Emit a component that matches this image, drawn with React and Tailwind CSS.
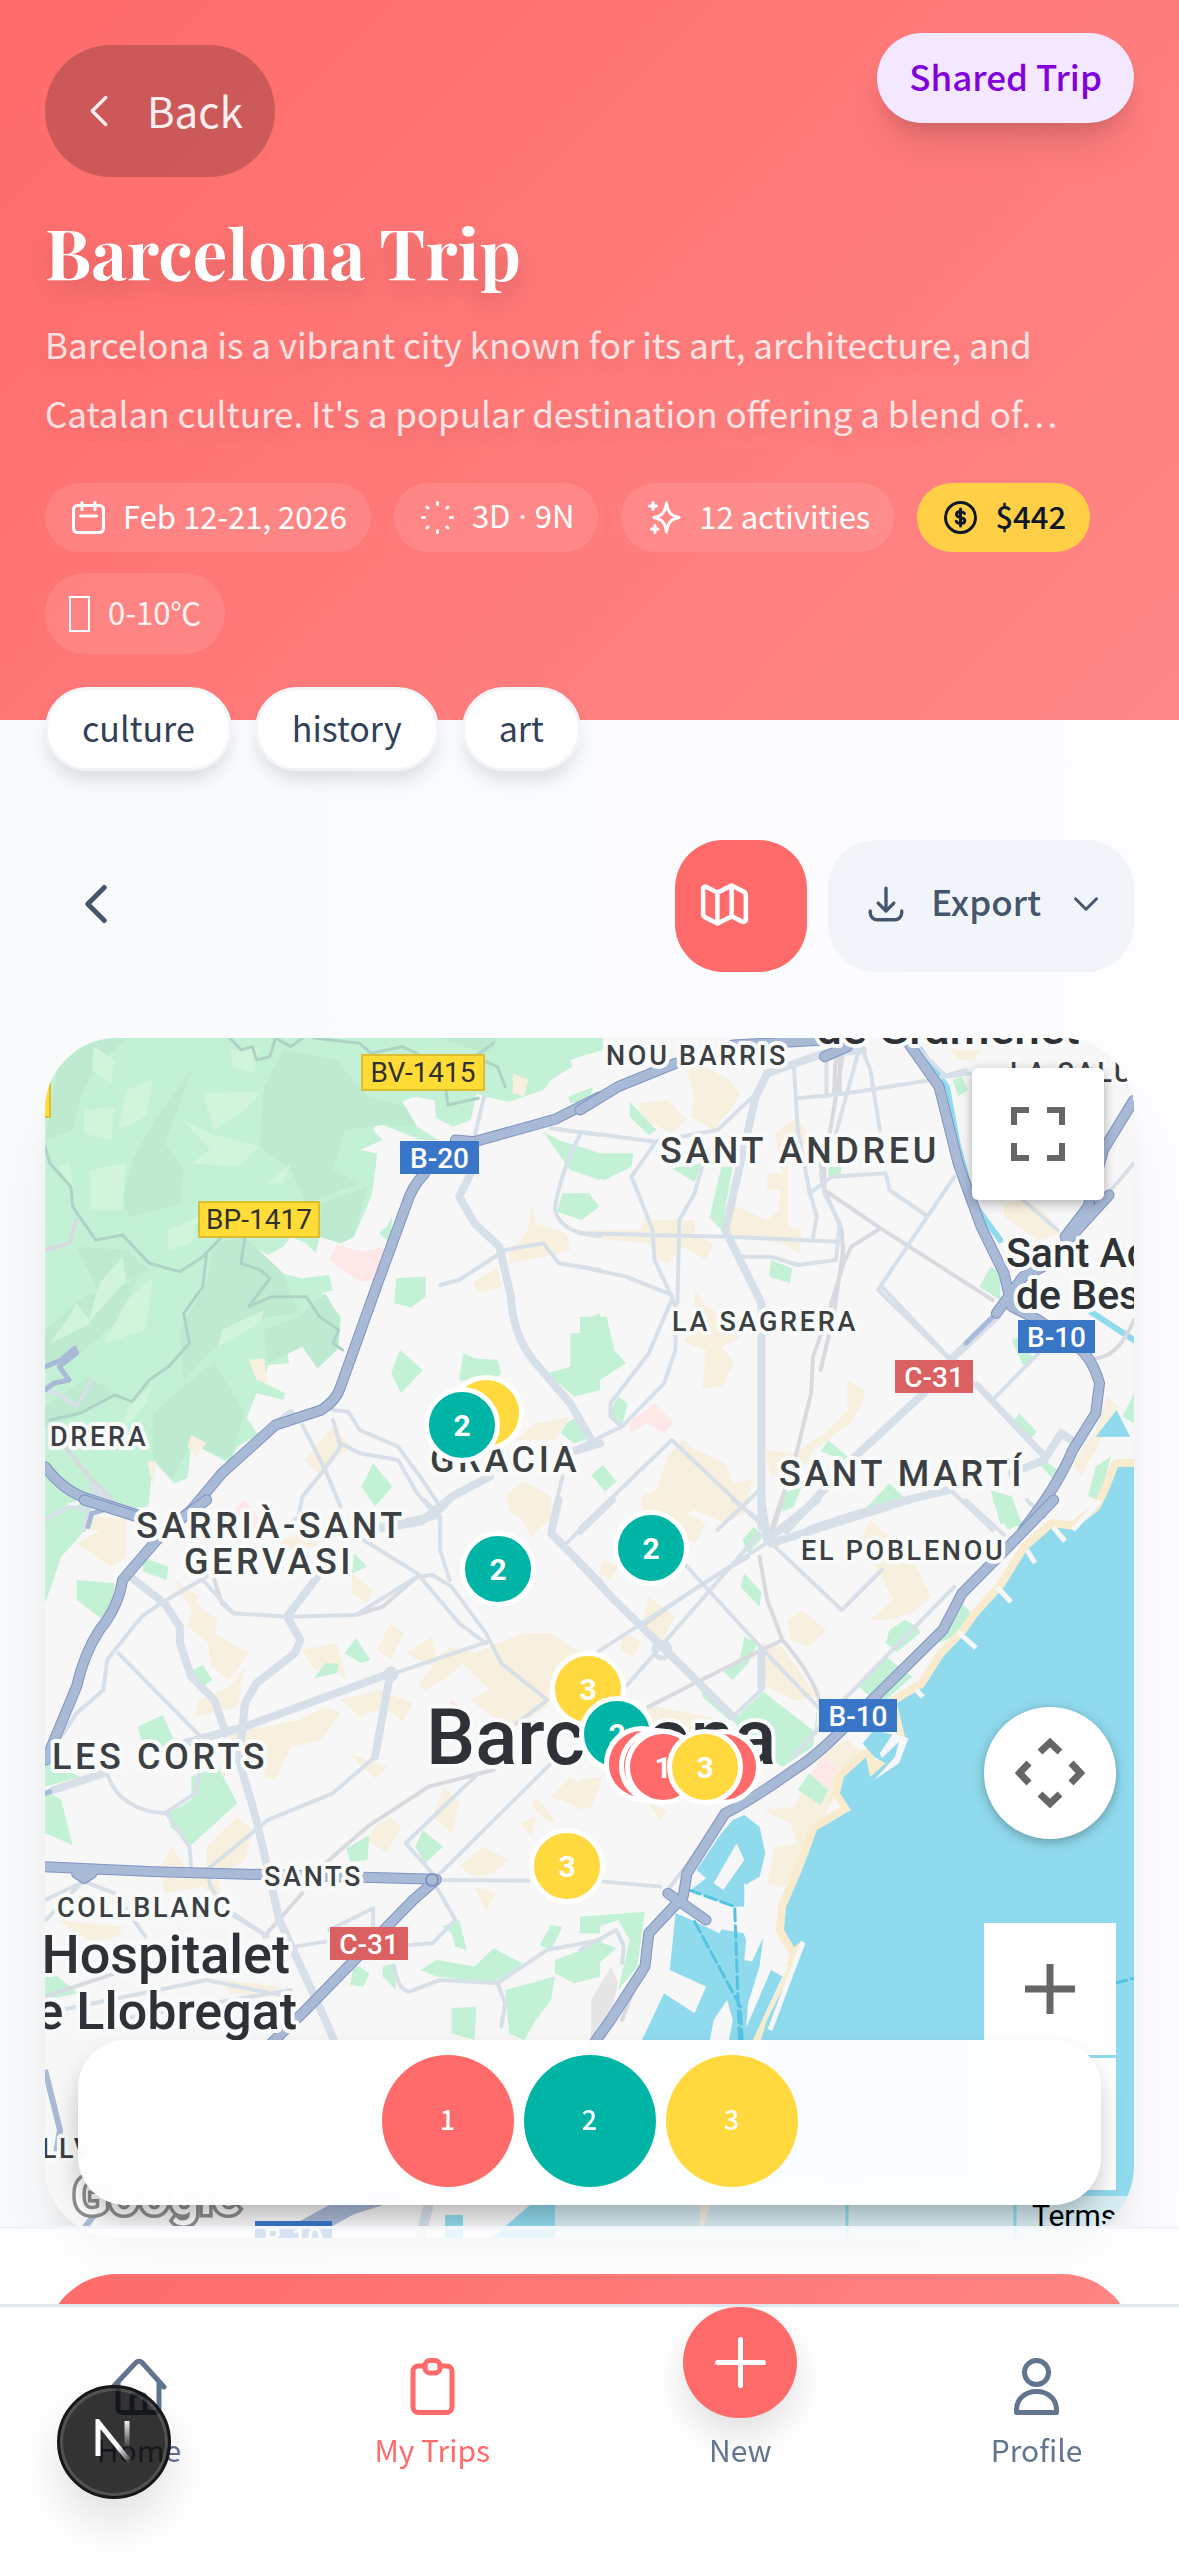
import { useState } from "react"
import { ChevronLeft, ChevronDown } from "lucide-react"

const BODY_FONT = "font-['Noto_Sans_CJK_SC','Noto_Sans',sans-serif]"

const tags = ["culture", "history", "art"]

const days = [
  { day: 1, color: "bg-[#ff6b6b]" },
  { day: 2, color: "bg-[#00b5a6]" },
  { day: 3, color: "bg-[#ffd93d]" },
]

// x / y are map units, same space as the map viewBox
const pins = [
  { day: 3, x: 486, y: 1413 },
  { day: 2, x: 462, y: 1425 },
  { day: 2, x: 498, y: 1569 },
  { day: 2, x: 651, y: 1548 },
  { day: 3, x: 588, y: 1689 },
  { day: 2, x: 617, y: 1734 },
  { day: 1, x: 642, y: 1764 },
  { day: 1, x: 657, y: 1766 },
  { day: 1, x: 723, y: 1767 },
  { day: 1, x: 663, y: 1767 },
  { day: 3, x: 705, y: 1767 },
  { day: 3, x: 567, y: 1866 },
]

const COAST =
  "M1134 1467 L1118 1467 1109 1490 1096 1517 1103 1507 1073 1530 1053 1527 1027 1550 1004 1587 977 1617 966 1633 943 1657 924 1687 897 1703 905 1737 886 1763 870 1777 866 1757 844 1777 840 1793 851 1810 817 1830 801 1873 786 1907 784 1930 794 1947 803 1940 794 1967 767 2020 700 2238"

const tiles = [
  {
    id: "nw",
    transform: "translate(0 1030) scale(.3827 .3333)",
    forest:
      "M118 24H1568V60L1490 90 1495 110 1440 150 1420 180 1330 215 1270 200 1245 190 1230 270 1185 290 1140 265 1135 210 1080 200 1050 215 1090 290 1145 330 1100 330 1000 285 985 275 975 300 1000 330 940 360 985 370 980 430 970 500 925 620 890 640 835 620 825 670 800 640 760 620 740 650 700 675 665 650 670 700 650 715 720 725 790 745 860 735 870 780 840 790 890 860 885 950 830 1015 790 950 750 955 755 1000 700 1005 690 1060 745 1090 740 1110 670 1090 645 1165 675 1215 620 1250 600 1300 500 1240 495 1290 490 1345 455 1360 400 1290 388 1430 300 1440 240 1400 180 1420 118 1480Z",
    forestDark:
      "M118 330L150 120 200 60 230 30 330 24 250 110 210 200 190 300ZM350 380L410 260 500 120 460 250 430 340 480 420 470 520 340 560 320 500ZM690 170L740 60 880 90 960 200 1060 230 1090 290 1000 285 900 300 870 420 940 460 800 520 760 420 680 350ZM560 640L640 620 740 730 780 850 700 860 560 950 480 1050 470 900 540 760ZM780 860L850 790 890 870 880 960 830 1015 790 950 700 1000 690 900ZM118 900L220 800 340 760 380 700 300 880 200 980 118 1000ZM400 1150L500 1050 560 1000 640 1150 600 1290 500 1240 450 1350 400 1290ZM840 520L960 470 925 620 890 640 835 620ZM1150 24L1300 24 1280 70 1240 60ZM118 1130L230 1040 300 1090 200 1160 118 1190ZM200 650L330 660 390 720 260 790Z",
    forestLight:
      "M245 50L300 90 290 160 240 120ZM235 420L330 400 320 540 235 540ZM480 270L550 310 680 350 620 410 500 400 550 360ZM530 190L680 185 640 240 560 300ZM260 760L320 680 330 750 230 880ZM340 800L400 740 380 900 270 940ZM580 900L690 840 680 880 570 950ZM180 860L200 820 240 880 130 940ZM330 1140L400 1060 380 1120 320 1210ZM600 60L680 50 660 130 610 110ZM330 180L400 150 380 260 310 300ZM440 600L520 560 500 640 440 660ZM150 410L180 400 190 470ZM700 460L760 400 740 460ZM220 240L300 230 290 330 220 310Z",
    parks:
      "M1035 745L1112 740 1112 800 1075 832 1030 820ZM1045 960L1105 1020 1048 1090 1022 1030ZM1210 970L1240 985 1300 990 1310 1030 1280 1060 1200 1050ZM1470 490L1540 490 1565 530 1520 570 1455 545ZM1420 305L1460 330 1568 370V450L1490 420 1440 340ZM1485 200L1550 170 1540 210 1490 220ZM1520 870L1568 850V1080L1500 1100 1430 1030 1490 1010 1490 910 1520 910ZM975 1300L1025 1370 980 1430 945 1370ZM1480 1180L1520 1150 1530 1230 1500 1240 1465 1210ZM1010 590L1025 560 1020 640 990 610Z",
    blocks:
      "M1390 520L1400 580 1480 610 1490 660 1420 680 1330 700 1330 670 1380 600ZM1300 710L1310 770 1250 790 1235 760ZM1340 130L1380 150 1370 200 1340 190ZM650 990L690 985 700 1060 670 1050ZM870 1190L920 1250 860 1300 840 1340 795 1290ZM1350 1230L1400 1180 1490 1160 1450 1230ZM1370 1355L1440 1400 1440 1470 1400 1500 1330 1440 1325 1390ZM500 1215L540 1240 510 1280 490 1250ZM385 1295L410 1295 400 1370ZM250 1460L330 1470 300 1500 230 1500Z",
    pink: "M880 645L950 665 1005 650 975 750 940 755 860 690ZM610 1440L640 1410 680 1470 660 1500 620 1480Z",
    tracks:
      "M118 350L130 400 185 470 190 530 250 630 320 615 390 700 470 725 530 680 580 620M540 670L530 770 480 850 495 940 440 1010 390 1050 345 1115 300 1095 210 1150 130 1170M640 620L630 700 680 720 705 745 650 830 710 800 800 800 835 860 885 900 870 940 895 960M600 24L630 60 660 50 670 90 705 80 720 24 760 50 790 24M820 24L940 40 970 70 1050 50 1090 70M1290 40L1240 80 1300 110 1320 170M1165 180L1170 225 1250 205",
    rail: "M118 660L180 640 200 570M170 1250L240 1350 320 1440",
    minor:
      "M1265 200L1240 320M1440 295L1568 315M1515 315Q1460 440 1450 540Q1465 610 1568 618M1150 765L1200 750 1320 660 1420 640 1460 700 1568 720M870 1140L910 1145 940 1200 1040 1250 1110 1360 1150 1430M870 1170L890 1250 840 1330 790 1400 780 1460 740 1500M790 1185L850 1320 890 1430M890 1240L940 1270 1040 1290 1090 1390 1150 1470 1150 1500M1470 1340L1440 1480M118 1080L150 1090 200 1130 240 1050M118 1470L180 1430 230 1440 220 1500",
    major:
      "M1230 430L1200 500 1240 580 1305 650 1335 800Q1340 920 1400 1000L1490 1120 1550 1240M1568 1240L1480 1270M1280 1340L1180 1400 1130 1460 1000 1490M240 1370L300 1430M730 1175L760 1150",
    highway:
      "M1568 200L1450 268 1240 335 1190 330M1110 430Q1075 470 1060 530L990 750 940 910 890 1070Q880 1110 840 1140L720 1185 580 1330 500 1440 440 1500M118 1310Q170 1390 240 1410L360 1455",
    loops: "M118 1010L160 990 195 955 200 970 155 1010 180 1050 140 1060 118 1080",
  },
  {
    id: "ne",
    transform: "translate(580 1030) scale(.382 .3333)",
    parks:
      "M0 24L60 24 60 60 0 80ZM0 370L140 370 135 410 65 450 0 430ZM0 490L50 525 0 570ZM130 215L200 300 180 315 130 260ZM370 410L400 410 370 600 340 560ZM240 415L320 400 300 455ZM500 690L555 715 550 760 495 740ZM0 860L70 860 90 960 120 1000 40 1060 10 1085 0 1080ZM100 1100L125 1120 110 1185 75 1150ZM60 1305L95 1355 65 1385 30 1335ZM650 410L685 410 680 440 650 440ZM975 150L1000 140 1015 180 990 200ZM1075 710L1100 730 1100 810 1045 770ZM1130 930L1150 920 1190 990 1160 1005ZM1150 1150L1195 1205 1180 1225 1130 1180ZM650 1230L700 1280 690 1290 630 1265ZM810 1360L855 1410 735 1450ZM1075 1380L1130 1400 1160 1490 1100 1480ZM1215 1290L1250 1320 1240 1350 1200 1300ZM1390 1280L1360 1410 1330 1400 1350 1310ZM530 1390L580 1370 560 1430 530 1445ZM1450 1090V1180L1420 1160Z",
    blocks:
      "M280 120L330 110 390 150 420 190 400 230 370 270 350 300 290 260 300 200ZM150 220L230 210 280 270 240 310 170 270ZM570 260L600 320 545 400 545 590 580 600 575 670 530 640 380 610 330 560 410 530 490 570 520 540 525 480 490 480 490 430 530 430 510 310ZM30 600L160 600 165 570 300 570 300 620 350 640 330 690 270 650 230 700 200 690 180 640 30 625ZM300 780L330 830 360 850 410 850 440 880 410 930 370 950 405 1000 370 1070 320 1075 330 960 270 935 310 880 300 820ZM700 1050L745 1080 740 1120 715 1170 640 1240 610 1260 590 1310 500 1340 485 1260 560 1270 640 1210 700 1140ZM270 1225L290 1250 380 1300 400 1360 450 1350 430 1450 380 1480 300 1440 230 1490 170 1460 160 1400 200 1380 230 1280ZM1110 520L1160 510 1210 540 1260 610 1200 630 1110 560ZM1380 1100L1410 1130 1350 1260 1310 1340 1290 1300 1350 1200ZM970 60L1050 60 1030 90 990 90Z",
    pink: "M195 1120L245 1180 220 1210 175 1180 130 1210 135 1170Z",
    water: "M1405 1140L1440 1220 1350 1220Z",
    river: "M885 50L960 170 990 350 1030 520 1100 630M1330 840L1450 930",
    rail: "M690 60L670 200 640 400 640 480 685 600 690 700 650 850 610 980 605 1090 560 1300 500 1500M640 480L780 590 1080 810M690 700L710 650 780 600M1450 870Q1410 980 1350 985M690 650L665 850 630 1020M670 60L665 190M680 60L680 190M630 400L640 480",
    minor:
      "M0 610L380 620 680 635M0 710L120 740 240 795M195 340L135 440 190 600 195 690 240 800 250 830M0 305L195 335 360 300 480 170M320 410L300 490 260 570 255 820M250 830L250 960 220 1060 110 1190 0 1250M240 810L180 970 80 1120 80 1160 110 1190M560 110L570 300 600 480 620 560 610 620M570 205L700 190 920 150 1010 120M740 60L760 120 785 300M645 80L645 200M600 490L660 440 800 430 810 480 905 555M980 440L780 780 970 990M790 770L1220 1290M630 430L640 490 680 580 670 690 570 705 500 680 420 680M1200 970L1080 1110M1040 1060L1215 1270M0 1495L240 1230 480 1490M880 50L960 140 1020 130M1450 400L1270 640M360 1500L470 1380M970 1380L1080 1500M730 60L670 310M1160 510L1250 600",
    major:
      "M740 60L640 70 490 130 460 200 380 600 475 820 475 1490M900 1090L720 1280 540 1500M1090 860L970 990M600 1500Q800 1420 970 1380M1130 1330L1215 1290 1260 1210 1300 1240",
    highway:
      "M860 40L940 170 990 400 1050 590 1110 730 1130 830 1200 870 1300 950Q1340 980 1360 1060L1350 1150 1290 1260Q1250 1370 1160 1500M1450 210L1370 360 1330 530 1270 620M1230 700L1160 740 1090 850M0 240L100 170 250 100M400 45L640 30M640 80L700 50M1385 495L1270 640",
    loops: "M1090 850L1010 940",
  },
  {
    id: "sw",
    transform: "translate(0 1500) scale(.3827 .3333)",
    parks:
      "M118 50L240 0 240 60 200 120 160 170 118 310ZM370 170L440 200 435 240 375 215ZM200 240L300 250 290 340 270 360 200 300ZM360 680L425 645 455 720 430 740 370 720ZM118 780L210 830 118 860ZM118 870L160 900 190 1035 118 1000ZM440 940L500 900 500 830 570 800 620 910 500 1035 445 980ZM930 415L968 480 945 490 900 460ZM820 535L850 490 885 490 880 520ZM505 510L530 495 555 540 530 560 505 540ZM925 160L960 200 920 220ZM905 1045L965 1005 960 1080 915 1085ZM1105 990L1158 1040 1110 1090 1085 1040ZM1155 1280L1200 1260 1220 1350 1190 1340 1180 1300ZM1100 1410L1140 1380 1240 1400 1290 1345 1365 1390 1300 1450 1140 1430ZM1440 1275L1470 1280 1440 1350 1410 1335ZM1450 1380L1568 1330 1568 1430 1500 1450 1450 1420ZM1320 1470L1450 1430 1440 1500 1400 1560 1370 1620 1330 1600ZM1180 1525L1245 1520 1240 1620 1180 1600ZM118 1400L205 1480 118 1500ZM925 1390L965 1420 950 1460 915 1455ZM1000 1400L1030 1390 1035 1470 1000 1430ZM1568 1250V1300L1510 1300Z",
    blocks:
      "M455 240L520 290 510 310 570 360 560 400 650 460 600 540 550 500 545 430 490 380 500 330ZM600 700L780 660 850 620 890 640 840 720 760 740 720 840 690 830 700 770 600 760ZM520 600L600 560 640 500 620 620 550 640 510 650ZM1300 430L1370 400 1440 400 1490 440 1560 470 1440 560 1430 620 1330 690 1230 600 1280 570 1200 480ZM1060 460L1130 410 1140 470 1180 440 1250 460 1210 490 1160 540 1110 570 1095 550 1130 500ZM1020 370L1055 400 1020 480 985 450ZM790 450L880 430 905 545 870 500 820 510ZM890 600L990 570 1080 610 1050 665 1010 620 940 650ZM910 760L1015 800 980 835ZM250 100L330 40 330 170 290 200 200 130ZM1160 860L1200 910 1180 1000 1130 950ZM980 980L1020 950 1050 980 1010 1060 960 1020ZM420 1100L450 1040 490 1110 540 1100 540 1040 620 950 660 990 640 1080 570 1130 580 1210 530 1160 430 1180ZM1200 1100L1260 1040 1330 1080 1290 1120 1240 1130ZM1240 1160L1295 1180 1270 1235ZM150 1260L320 1280 310 1310 240 1330ZM590 1440L730 1460 700 1490 600 1480ZM730 120L830 90 830 140 740 150ZM920 220L975 270 960 310 920 280ZM1330 0L1440 40 1390 110ZM1490 830L1550 880 1530 930 1440 890ZM1400 890L1450 960 1440 970 1390 920ZM1360 970L1400 950 1390 1010Z",
    pink: "M1180 600L1200 615 1170 620ZM575 790L600 820 580 830Z",
    rail: "M1290 810L1120 860 960 980 850 1090M790 1180L690 1310M560 240L580 310 610 340M118 1490L300 1420M1090 230L1000 320 930 345",
    minor:
      "M1030 520L1275 425M980 770L870 880 700 960 540 1110 550 1160 600 1240 700 1310M310 460L520 705M540 230L420 310 370 350 300 450 280 480 270 570 200 640 130 760M530 240L610 340 750 350 930 345 1090 230 1130 225 1180 260 1270 400 1310 490 1430 600M950 120L1090 220 1200 370 1270 430M280 820Q310 930 430 940L510 880 520 820M435 940L495 1040 500 1110M1430 600L1350 670M1250 820L1060 1030 1130 1120M1150 1120L1440 790M1150 1140L1380 1142M1140 1160L1190 1260 1130 1330 1070 1335M770 1340L850 1325M118 1200L220 1145 300 1180 380 1310M120 1260L220 1140M1030 1400Q1040 1470 1070 1475L1150 1440 1300 1450 1430 1350 1568 1320M1300 1450L1320 1510 1310 1580M1480 130L1568 30M1110 0L1150 50 1150 150 1175 240M118 1540L540 1440 750 1490M300 1560L760 1470M610 1240L700 1310M860 1290L975 1225 975 1290",
    major:
      "M340 230L430 310 470 380 470 430 500 530 560 600 590 700M830 230L750 350 785 420 770 460 670 550 640 610 625 780 670 960 730 1260 850 1560 880 1640M480 730L640 680 1020 520M140 870L270 820M1020 520L980 770M1000 85L1100 65 1170 0M1460 0L1440 100 1568 250",
    highway:
      "M540 0L480 50 410 120 320 240Q310 320 260 390Q220 460 200 560L120 780M220 0L370 55M118 1100L400 1115 1140 1138M1140 1140L1080 1200 790 1540 700 1640M200 1120L220 1135 240 1120",
    loops: "M118 880L130 875M230 80L240 40 300 20",
  },
  {
    id: "se",
    transform: "translate(580 1500) scale(.382 .3333)",
    parks:
      "M430 220L475 275 470 320 420 260ZM850 360L885 380 890 400 830 455 800 430 810 390ZM800 470L870 530 800 600 770 600 730 560ZM1000 310L1025 340 1010 390 940 430 920 400 960 360ZM430 410L465 430 440 490 400 540 375 515 420 470ZM480 575L620 700 620 620 610 740 530 800 460 760 400 660ZM600 820L650 870 630 915 570 870ZM320 570L340 570 410 650 390 660 320 590ZM0 1250L170 1235 150 1400 100 1470 130 1320 100 1260 20 1290 0 1300ZM0 1350L40 1320 95 1345 0 1440ZM1080 0L1110 0 1160 70 1120 90ZM455 80L480 110 440 160 425 120Z",
    blocks:
      "M760 60L810 110 880 200 920 290 870 340 800 360 760 360 820 300 790 230 730 130ZM580 330L645 390 600 440 550 420 545 360ZM240 20L330 70 300 130 260 110 200 40ZM470 430L530 440 620 590 560 600 490 560ZM60 180L100 200 80 240 50 220ZM180 290L250 350 210 430 160 390ZM200 620L380 660 400 700 200 690 160 620ZM640 750L700 720 740 760 680 850 630 980 580 1110 530 1160 490 1150 510 1040 570 1030 550 970 480 930 560 920ZM110 400L160 420 140 470 105 450ZM0 840L60 830 30 920 0 930ZM180 910L230 930 210 965Z",
    pink: "M640 770L675 800 650 870 605 820Z",
    water:
      "M400 960L430 945 470 980 485 1060 470 1130 440 1150 430 1220 400 1220 290 1170 330 1135 305 1110 370 1000ZM250 1240L310 1265 380 1290 480 1310 470 1400 440 1510 430 1650 150 1650 220 1480 300 1540 330 1460 235 1410ZM500 1410L530 1430 440 1650 410 1650ZM740 730L770 690 855 715 800 790 770 770Z",
    piers:
      "M350 1150L410 1030 430 1080 375 1170ZM280 1200L300 1200 385 1260 365 1300 255 1240ZM430 1150L450 1160 445 1225 430 1225ZM425 1290L485 1300 450 1385 430 1380 435 1320ZM385 1500L400 1560 390 1620 340 1620 350 1560ZM820 700L860 715 835 790 770 840 825 770 835 725 790 775 785 760Z",
    ferry: "M285 1170L405 1220 418 1640M300 1265L420 1520 425 1640M1400 1450L1450 1435M1240 1560L1060 1500",
    rail: "M530 420L300 550 180 620M470 170L490 300 530 420Q620 540 630 620M440 170Q300 260 160 380M530 0L500 110M150 1440L110 1560",
    minor:
      "M500 120L40 460M470 100L120 560M240 150L480 450 630 630M480 450L475 570 400 650M510 140L685 330 790 210M980 260L690 600 560 770M0 1140L60 1145 210 1160M400 0L470 60M0 100L90 0M1010 0L1110 105M380 940L230 1170M1170 0L1215 50M0 1350L95 1290 115 1340 110 1390",
    major: "M475 0L490 120 620 0M500 130L860 0M0 190L90 300 215 440 400 650M475 450V560",
    highway:
      "M1240 0L1130 130 1000 280 950 390 720 650Q620 770 560 810Q450 900 380 940L330 1030 280 1120 270 1190 180 1300 170 1400 80 1560 30 1640M230 1180L330 1260",
  },
]

const labels = [
  { text: "NOU BARRIS", x: 606, y: 1065, size: 27, spaced: true },
  { text: "SANT ANDREU", x: 660, y: 1163, size: 36, spaced: true },
  { text: "LA SAGRERA", x: 672, y: 1331, size: 27, spaced: true },
  { text: "SANT MARTÍ", x: 779, y: 1486, size: 36, spaced: true },
  { text: "DRERA", x: 50, y: 1446, size: 27, spaced: true },
  { text: "GRÀCIA", x: 430, y: 1472, size: 36, spaced: true },
  { text: "SARRIÀ-SANT", x: 136, y: 1538, size: 36, spaced: true },
  { text: "GERVASI", x: 184, y: 1574, size: 36, spaced: true },
  { text: "EL POBLENOU", x: 801, y: 1560, size: 27, spaced: true },
  { text: "LES CORTS", x: 52, y: 1769, size: 36, spaced: true },
  { text: "SANTS", x: 264, y: 1886, size: 27, spaced: true },
  { text: "COLLBLANC", x: 57, y: 1917, size: 27, spaced: true },
  { text: "LA SALUT", x: 1010, y: 1082, size: 27, spaced: true },
  { text: "BELLVITGE", x: 4, y: 2158, size: 27, spaced: true },
  { text: "de Gramenet", x: 816, y: 1044, size: 46 },
  { text: "Sant Adrià", x: 1006, y: 1267, size: 41 },
  { text: "de Besòs", x: 1016, y: 1309, size: 41 },
  { text: "Barcelona", x: 426, y: 1764, size: 78 },
  { text: "L'Hospitalet", x: 290, y: 1973, size: 54, end: true },
  { text: "de Llobregat", x: 297, y: 2029, size: 52, end: true },
]

const shields = [
  { text: "BV-1415", x: 362, y: 1055, w: 122, kind: "yellow" },
  { text: "BP-1417", x: 199, y: 1202, w: 120, kind: "yellow" },
  { text: "", x: -20, y: 1082, w: 70, kind: "yellow" },
  { text: "B-20", x: 400, y: 1141, w: 79, kind: "blue" },
  { text: "B-10", x: 1018, y: 1320, w: 77, kind: "blue" },
  { text: "B-10", x: 819, y: 1699, w: 78, kind: "blue" },
  { text: "B-10", x: 255, y: 2221, w: 77, kind: "blue" },
  { text: "C-31", x: 895, y: 1360, w: 78, kind: "red" },
  { text: "C-31", x: 330, y: 1927, w: 78, kind: "red" },
]

const shieldFill = { yellow: "#ffdc36", blue: "#3a76c8", red: "#da6062" }

function Line({ d, color, width, dash }) {
  return (
    <path d={d} fill="none" stroke={color} strokeWidth={width} strokeDasharray={dash} strokeLinecap="round" strokeLinejoin="round" vectorEffect="non-scaling-stroke" />
  )
}

function CityMap() {
  return (
    <svg viewBox="45 1038 1089 1200" preserveAspectRatio="xMidYMid slice" className="block h-full w-full" aria-label="Map of Barcelona" role="img">
      <rect x="0" y="1000" width="1200" height="1300" fill="#f7f7f7" />

      {/* Land use */}
      {tiles.map(t => (
        <g key={t.id} transform={t.transform}>
          {t.forest && <path d={t.forest} fill="#c3f1d5" />}
          {t.forestDark && <path d={t.forestDark} fill="#bdead0" />}
          {t.forestLight && <path d={t.forestLight} fill="#d0f5da" />}
          <path d={t.blocks} fill="#f8f0de" />
          <path d={t.parks} fill="#c3f1d5" />
          {t.pink && <path d={t.pink} fill="#fde8e7" />}
        </g>
      ))}
      <path d="M591 2000L611 1967 618 1983 606 2038 591 2038Z" fill="#e6e6e6" />

      {/* Sea and harbour */}
      <path d={COAST} fill="none" stroke="#f9ebcd" strokeWidth="16" strokeLinejoin="round" />
      <path d={`${COAST} H1134 Z`} fill="#90daee" />
      <path d="M1053 1527L1065 1541M1073 1530L1100 1500M1027 1550L1035 1563M997 1587L1011 1602M958 1632L976 1648M916 1690L923 1697M770 2030L803 1942M786 1965L764 2012" stroke="#f7f7f7" strokeWidth="5" fill="none" />
      {tiles.map(t => (
        <g key={t.id} transform={t.transform}>
          {t.water && <path d={t.water} fill="#90daee" />}
          {t.piers && <path d={t.piers} fill="#f7f7f7" />}
          {t.river && <Line d={t.river} color="#90daee" width={6} />}
          {t.ferry && <Line d={t.ferry} color="#54c3e2" width={3} dash="12 5" />}
        </g>
      ))}

      {/* Roads */}
      {tiles.map(t => (
        <g key={t.id} transform={t.transform}>
          {t.tracks && <Line d={t.tracks} color="#aed3c6" width={3} />}
          <Line d={t.rail} color="#d8dadf" width={4} />
          <Line d={t.minor} color="#d7e0e8" width={4} />
          <Line d={t.major} color="#d7e0e8" width={8} />
          {t.loops && <Line d={t.loops} color="#a9b9d8" width={5} />}
        </g>
      ))}
      {tiles.map(t => (
        <g key={t.id} transform={t.transform}>
          <Line d={t.highway} color="#8093c2" width={11} />
          <Line d={t.highway} color="#a9bad7" width={9} />
        </g>
      ))}
      <circle cx="662" cy="1650" r="8" fill="none" stroke="#d7e0e8" strokeWidth="5" />
      <circle cx="391" cy="1674" r="5" fill="none" stroke="#d7e0e8" strokeWidth="5" />
      <circle cx="432" cy="1880" r="6" fill="#a9bad7" stroke="#8093c2" strokeWidth="2" />
      <path d="M45 2070L60 2130 55 2160M75 2240L110 2195 160 2180" fill="none" stroke="#a9bad7" strokeWidth="6" />
      <path d="M290 2238L350 2205 430 2180" fill="none" stroke="#a9bad7" strokeWidth="20" />
      <path d="M420 2238L430 2200" fill="none" stroke="#d7e0e8" strokeWidth="10" />
      <path d="M445 2215h18v23h-18ZM492 2238L530 2205 580 2180 700 2180 700 2238Z" fill="#90daee" />

      {/* Place names */}
      {labels.map(l => (
        <text key={l.text} x={l.x} y={l.y} fontSize={l.size} textAnchor={l.end ? "end" : "start"}
          className={l.spaced ? "font-['Roboto',sans-serif] font-medium tracking-widest" : "font-['Roboto',sans-serif] font-medium"}
          fill={l.spaced ? "#3c4043" : "#2e3135"} stroke="#f9fbfb" strokeWidth="8" strokeLinejoin="round" paintOrder="stroke">
          {l.text}
        </text>
      ))}
      {shields.map((s, i) => (
        <g key={i}>
          <rect x={s.x} y={s.y} width={s.w} height={s.kind === "yellow" ? 35 : 33} fill={shieldFill[s.kind]} stroke={s.kind === "yellow" ? "#dfbd33" : "none"} strokeWidth="2" />
          <text x={s.x + s.w / 2} y={s.y + 27} fontSize="28" textAnchor="middle" fill={s.kind === "yellow" ? "#303030" : "#ffffff"}
            className={s.kind === "yellow" ? "font-['Roboto',sans-serif]" : "font-['Roboto',sans-serif] font-medium"}>
            {s.text}
          </text>
        </g>
      ))}
      <text x="73" y="2214" fontSize="53" className="font-['Roboto',sans-serif] font-medium" fill="#ffffff" stroke="#8e8e8e" strokeWidth="7" paintOrder="stroke">Google</text>

      {/* Attribution strip */}
      <rect x="555" y="2196" width="579" height="42" fill="#f5f5f5" fillOpacity="0.7" />
      <path d="M847 2196v42M1015 2196v42" stroke="#90daee" strokeWidth="3" />
      <text x="1032" y="2226" fontSize="30" className="font-['Roboto',sans-serif]" fill="#000000">Terms</text>
    </svg>
  )
}

function ChipIcon({ children }) {
  return (
    <svg width="33" height="33" viewBox="0 0 33 33" fill="none" stroke="currentColor" strokeWidth="3" strokeLinecap="round" strokeLinejoin="round" className="shrink-0" aria-hidden="true">
      {children}
    </svg>
  )
}

function Chip({ icon, className, children }) {
  return (
    <span className={`flex h-[69px] items-center gap-[18px] rounded-full pr-6 pl-[27px] text-[31px] ${className}`}>
      <ChipIcon>{icon}</ChipIcon>
      <span className="pb-[3px]">{children}</span>
    </span>
  )
}

function Header() {
  return (
    <header className="relative bg-linear-135 from-[#ff6b6b] to-[#ff8787] px-[45px] pt-[45px] pb-[66px] text-white">
      <span className="absolute top-[33px] right-[45px] flex h-[90px] items-center rounded-full bg-[#f3e8ff] px-8 pb-[3px] text-[35px] font-medium text-[#8200db] shadow-[0_30px_45px_-9px_rgba(0,0,0,0.1),0_12px_18px_-6px_rgba(0,0,0,0.12)]">
        Shared Trip
      </span>
      <button type="button" className="flex h-[132px] items-center gap-[21px] rounded-full bg-black/20 pr-8 pl-[27px] text-[42px] text-white/90">
        <ChevronLeft size={54} strokeWidth={1.5} />
        <span className="pb-[3px]">Back</span>
      </button>

      <h1 className="mt-8 font-['Playfair_Display','Liberation_Serif',serif] text-[69px] leading-[84px] font-bold text-shadow-[0_12px_24px_rgba(0,0,0,0.15)]">
        Barcelona Trip
      </h1>
      <p className="mt-4 text-[35px] leading-[69px] text-white/80 text-shadow-[0_9px_18px_rgba(0,0,0,0.1)]">
        Barcelona is a vibrant city known for its art, architecture, and Catalan culture. It's a popular destination offering a blend of…
      </p>

      <div className="mt-9 flex flex-wrap gap-x-[23px] gap-y-[21px]">
        <Chip className="bg-white/10" icon={<><rect x="1.5" y="4.5" width="30" height="27" rx="4" /><path d="M10 1.5v7M23 1.5v7M8.5 15h16" /></>}>
          Feb 12-21, 2026
        </Chip>
        <Chip className="bg-white/10" icon={<path d="M16.5 1.5v2M16.5 29.5v2M1.5 16.5h2M29.5 16.5h2M6 6l1 1M26 26l1 1M27 6l-1 1M7 26l-1 1" />}>
          3D<span className="font-['Open_Sans',sans-serif]"> · </span>9N
        </Chip>
        <Chip className="bg-white/10" icon={<><path d="M18.5 2C20 11 22 14.5 31 16.5C22 18.5 20 22 18.5 31C17 22 15 18.5 6 16.5C15 14.5 17 11 18.5 2Z" /><path d="M5 1.5v7M1.5 5h7M7 24.5v7M3.5 28h6.5" /></>}>
          12 activities
        </Chip>
        <Chip className="bg-[#ffd045] font-medium text-[#0f172b]" icon={<><circle cx="16.5" cy="16.5" r="15" /><path d="M20.5 12.5C19.5 11 18 10.5 16.5 10.5C14 10.5 12.5 11.7 12.5 13.5C12.5 17.5 20.8 15.5 20.8 19.5C20.8 21.5 19 22.5 16.5 22.5C14.5 22.5 13 21.7 12.3 20.3M16.5 8v17" /></>}>
          $442
        </Chip>
        <span className="flex h-[81px] items-center gap-[18px] rounded-full bg-white/10 px-6 text-[31px] text-white/90">
          <span className="h-9 w-[21px] border-2 border-white" aria-hidden="true" />
          <span className="pb-[3px]">0-10℃</span>
        </span>
      </div>
    </header>
  )
}

function MapCard({ activeDay, setActiveDay }) {
  return (
    <section className="relative mt-[66px] h-[1200px] overflow-hidden rounded-[72px] shadow-[0_60px_75px_-15px_rgba(0,0,0,0.08),0_24px_30px_-18px_rgba(0,0,0,0.1)]">
      <CityMap />

      {pins.map((p, i) => (
        <button key={i} type="button" aria-label={`Day ${p.day} stop`}
          style={{ left: `${((p.x - 45) / 1089) * 100}%`, top: `${((p.y - 1038) / 1200) * 100}%` }}
          className={`absolute flex size-[76px] -translate-1/2 items-center justify-center rounded-full border-5 border-white font-['Roboto',sans-serif] text-[30px] font-bold text-white ${days[p.day - 1].color}`}>
          {p.day}
        </button>
      ))}

      <button type="button" aria-label="Toggle fullscreen view" className="absolute top-[30px] right-[30px] flex size-[132px] items-center justify-center rounded-md bg-white shadow-[0_3px_12px_rgba(0,0,0,0.3)]">
        <svg width="54" height="54" viewBox="0 0 18 18" fill="#666666"><path d="M0 0v6h2V2h4V0H0zm16 0h-4v2h4v4h2V0h-2zm0 16h-4v2h6v-6h-2v4zM2 12H0v6h6v-2H2v-4z" /></svg>
      </button>
      <button type="button" aria-label="Map camera controls" className="absolute right-[18px] bottom-[399px] flex size-[132px] items-center justify-center rounded-full bg-white shadow-[0_3px_12px_rgba(0,0,0,0.3)]">
        <svg width="70" height="70" viewBox="0 0 70 70" fill="none" stroke="#666666" strokeWidth="7"><path d="M25 14l10-9.5 10 9.5M25 56l10 9.5 10-9.5M14 25L4.5 35 14 45M56 25l9.5 10L56 45" /></svg>
      </button>
      <div className="absolute right-[18px] bottom-12 flex flex-col gap-[3px]">
        <button type="button" aria-label="Zoom in" className="flex size-[132px] items-center justify-center bg-white">
          <svg width="50" height="50" viewBox="0 0 50 50" stroke="#666666" strokeWidth="7"><path d="M25 0v50M0 25h50" /></svg>
        </button>
        <button type="button" aria-label="Zoom out" className="flex size-[132px] items-center justify-center bg-white">
          <svg width="50" height="50" viewBox="0 0 50 50" stroke="#666666" strokeWidth="7"><path d="M0 25h50" /></svg>
        </button>
      </div>

      {/* Day legend */}
      <div className="absolute right-[33px] bottom-[33px] left-[33px] flex h-[165px] justify-center gap-[10px] rounded-[48px] bg-white/95 pt-[15px] shadow-[0_15px_30px_-6px_rgba(0,0,0,0.3)] backdrop-blur-md">
        {days.map(d => (
          <button key={d.day} type="button" aria-pressed={activeDay === d.day} onClick={() => setActiveDay(d.day)}
            className={`size-[132px] rounded-full pb-[3px] text-[27px] font-medium text-white ${d.color}`}>
            {d.day}
          </button>
        ))}
      </div>
    </section>
  )
}

function NavItem({ label, active, children }) {
  return (
    <a href="#" className={`flex flex-col items-center gap-3 text-[30px] leading-[45px] ${active ? "text-[#ff6b6b]" : "text-[#62748e]"}`}>
      <svg width="57" height="57" viewBox="0 0 57 57" fill="none" stroke="currentColor" strokeWidth="5" strokeLinecap="round" strokeLinejoin="round" aria-hidden="true">
        {children}
      </svg>
      {label}
    </a>
  )
}

function BottomNav() {
  return (
    <nav className="fixed inset-x-0 bottom-0 z-30 flex h-[252px] items-end justify-around border-t-3 border-[#e2e8f0] bg-white pb-[84px]">
      <NavItem label="Home">
        <path d="M3 29L26 4.5a4 4 0 0 1 6 0L54 29M8 24v27a3.500 3.500 0 0 0 3.500 3.500h34A3.500 3.500 0 0 0 49 51V24M22 54V39a2 2 0 0 1 2-2h9a2 2 0 0 1 2 2v15" />
      </NavItem>
      <NavItem label="My Trips" active>
        <path d="M21 8H14a5 5 0 0 0-5 5v36a5.500 5.500 0 0 0 5.500 5.500h28A5.500 5.500 0 0 0 48 49V13a5 5 0 0 0-5-5H36" />
        <rect x="21" y="2.5" width="15" height="12.5" rx="5" />
      </NavItem>
      <a href="#" className="flex flex-col items-center gap-[9px] text-[30px] leading-[45px] text-[#62748e]">
        <span className="flex h-[111px] w-[114px] items-center justify-center rounded-full bg-[#ff6b6b] shadow-[0_18px_36px_rgba(0,0,0,0.12)]">
          <svg width="51" height="51" viewBox="0 0 51 51" stroke="#ffffff" strokeWidth="5" strokeLinecap="round" aria-hidden="true"><path d="M25.5 2.5v46M2.5 25.5h46" /></svg>
        </span>
        New
      </a>
      <NavItem label="Profile">
        <circle cx="28.5" cy="14.5" r="12" />
        <path d="M8.5 54.5v-3C8.5 41 17 33.5 28.5 33.5S48.5 41 48.5 51.5v3Z" />
      </NavItem>
    </nav>
  )
}

function DevBadge() {
  return (
    <button type="button" aria-label="Open dev tools" className="fixed bottom-[57px] left-[57px] z-40 flex size-[114px] items-center justify-center rounded-full border-3 border-[#171717] bg-black/80 shadow-[0_24px_48px_rgba(0,0,0,0.12)] inset-ring-3 inset-ring-white/15">
      <svg width="42" height="46" viewBox="0 0 42 46" fill="none" strokeWidth="5" aria-hidden="true">
        <defs>
          <linearGradient id="slash" x1="0" y1="0" x2="1" y2="1">
            <stop offset="0.6" stopColor="#ffffff" />
            <stop offset="1" stopColor="#ffffff" stopOpacity="0" />
          </linearGradient>
          <linearGradient id="stem" x1="0" y1="0" x2="0" y2="30" gradientUnits="userSpaceOnUse">
            <stop offset="0" stopColor="#ffffff" />
            <stop offset="1" stopColor="#ffffff" stopOpacity="0" />
          </linearGradient>
        </defs>
        <path d="M5 37V3L38 44" stroke="url(#slash)" />
        <path d="M34 2V28L34.1 30" stroke="url(#stem)" />
      </svg>
    </button>
  )
}

export default function App() {
  const [showMap, setShowMap] = useState(true)
  const [activeDay, setActiveDay] = useState(1)

  return (
    <div className={`min-h-screen bg-linear-to-r from-[#f8fafc] to-[#fdfdff] ${BODY_FONT}`}>
      <Header />

      <main className="px-[45px]">
        <ul className="relative -mt-[33px] flex gap-[23px]">
          {tags.map(tag => (
            <li key={tag} className="flex h-[84px] items-center rounded-full border-3 border-[#f1f5f9] bg-white px-[34px] pb-[3px] text-[34px] text-[#314158] shadow-[0_12px_18px_-3px_rgba(0,0,0,0.12)]">
              {tag}
            </li>
          ))}
        </ul>

        {/* Toolbar */}
        <div className="mt-[69px] flex h-[132px] items-center gap-[21px] text-[#45556c]">
          <button type="button" aria-label="Previous" className="mr-auto flex h-full w-[102px] items-center justify-center pb-1">
            <ChevronLeft size={66} strokeWidth={1.8} />
          </button>
          <button type="button" aria-label="Toggle map" aria-pressed={showMap} onClick={() => setShowMap(!showMap)} className="flex size-[132px] items-center rounded-[48px] bg-[#ff6b6b] pb-1 pl-[21px] text-white">
            <svg width="57" height="57" viewBox="0 0 24 24" fill="none" stroke="currentColor" strokeWidth="1.9" strokeLinecap="round" strokeLinejoin="round" aria-hidden="true">
              <path d="M4.5 4.6L9 7l6-3 5 2.500a2 2 0 0 1 1 1.800v10a1 1 0 0 1-1.500.9L15 17l-6 3-5-2.500a2 2 0 0 1-1-1.800v-10a1 1 0 0 1 1.500-1.100zM9 7v13M15 4v13" />
            </svg>
          </button>
          <button type="button" className="flex h-full items-center rounded-[48px] bg-[#f1f5f9] pr-[27px] pb-1 pl-[37px] text-[35px] font-medium">
            <svg width="42" height="42" viewBox="0 0 24 24" fill="none" stroke="currentColor" strokeWidth="1.9" strokeLinecap="round" strokeLinejoin="round" aria-hidden="true">
              <path d="M12 3v12.500M7.5 11.5L12 16l4.500-4.500M3 16v1a4 4 0 0 0 4 4h10a4 4 0 0 0 4-4v-1" />
            </svg>
            <span className="ml-6 pb-[6px]">Export</span>
            <ChevronDown size={42} strokeWidth={1.7} className="ml-6" />
          </button>
        </div>

        {showMap && <MapCard activeDay={activeDay} setActiveDay={setActiveDay} />}
      </main>

      {/* Sticky action bar, sits behind the tab bar */}
      <div className="fixed inset-x-0 bottom-0 z-20 h-[330px] border-t-3 border-[#f1f5f9] bg-white/80 px-[45px] pt-[45px]">
        <button type="button" aria-label="Save trip" className="h-[156px] w-full rounded-[72px] bg-linear-135 from-[#ff6b6b] to-[#ff8787]" />
      </div>
      <BottomNav />
      <DevBadge />
    </div>
  )
}
